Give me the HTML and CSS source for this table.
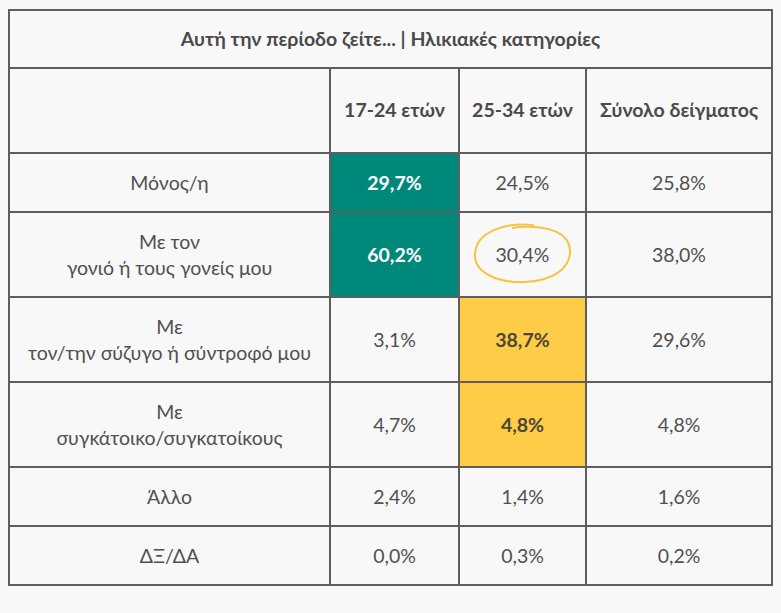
FILE: index.html
```html
<!DOCTYPE html>
<html lang="el">
<head>
<meta charset="utf-8">
<title>Αυτή την περίοδο ζείτε</title>
<link rel="stylesheet" href="styles.css">
</head>
<body>
<div class="wrap">
<table class="grid">
  <colgroup>
    <col class="c-label">
    <col class="c-a">
    <col class="c-b">
    <col class="c-total">
  </colgroup>
  <thead>
    <tr><th class="title" colspan="4">Αυτή την περίοδο ζείτε... | Ηλικιακές κατηγορίες</th></tr>
    <tr class="head">
      <th></th>
      <th>17-24 ετών</th>
      <th>25-34 ετών</th>
      <th>Σύνολο δείγματος</th>
    </tr>
  </thead>
  <tbody>
    <tr>
      <td>Μόνος/η</td>
      <td class="green">29,7%</td>
      <td>24,5%</td>
      <td>25,8%</td>
    </tr>
    <tr>
      <td>Με τον<br>γονιό ή τους γονείς μου</td>
      <td class="green">60,2%</td>
      <td><span class="circled">30,4%<svg class="ring" width="104" height="64" viewBox="0 0 104 64" aria-hidden="true"><path d="M62 4 C34 1 5 11 4 33 C3 52 27 62 54 61 C82 60 100 47 99 29 C98 12 78 4 48 6 L42 7" fill="none" stroke="#f6c445" stroke-width="2" stroke-linecap="round"/></svg></span></td>
      <td>38,0%</td>
    </tr>
    <tr>
      <td>Με<br>τον/την σύζυγο ή σύντροφό μου</td>
      <td>3,1%</td>
      <td class="yellow">38,7%</td>
      <td>29,6%</td>
    </tr>
    <tr>
      <td>Με<br>συγκάτοικο/συγκατοίκους</td>
      <td>4,7%</td>
      <td class="yellow">4,8%</td>
      <td>4,8%</td>
    </tr>
    <tr>
      <td>Άλλο</td>
      <td>2,4%</td>
      <td>1,4%</td>
      <td>1,6%</td>
    </tr>
    <tr>
      <td>ΔΞ/ΔΑ</td>
      <td>0,0%</td>
      <td>0,3%</td>
      <td>0,2%</td>
    </tr>
  </tbody>
</table>
</div>
</body>
</html>
```

FILE: styles.css
```css
html, body {
  margin: 0;
  background: #f8f8f8;
}

body {
  font-family: Lato, "Noto Sans", sans-serif;
  color: #505050;
  font-size: 19.5px;
}

.wrap {
  padding: 9px 0 0 8px;
}

.grid {
  border-collapse: collapse;
  table-layout: fixed;
  width: 763px;
}

.c-label { width: 321px; }
.c-a { width: 129px; }
.c-b { width: 127px; }
.c-total { width: 186px; }

.grid th,
.grid td {
  border: 2px solid #5e5e5e;
  text-align: center;
  vertical-align: middle;
  padding: 15.5px 4px;
  line-height: 26px;
}

.grid th {
  font-weight: 700;
  color: #4a4a4a;
}

.grid .title {
  padding-top: 15px;
  padding-bottom: 15px;
}

.grid .head th {
  padding-top: 28px;
  padding-bottom: 29px;
}

.grid td.green {
  background: #00897a;
  color: #ffffff;
  font-weight: 700;
}

.grid td.yellow {
  background: #ffcc47;
  color: #4a4737;
  font-weight: 700;
}

.circled {
  position: relative;
  display: inline-block;
}

.ring {
  position: absolute;
  left: 50%;
  top: 50%;
  margin-left: -52px;
  margin-top: -34px;
  pointer-events: none;
}
```
